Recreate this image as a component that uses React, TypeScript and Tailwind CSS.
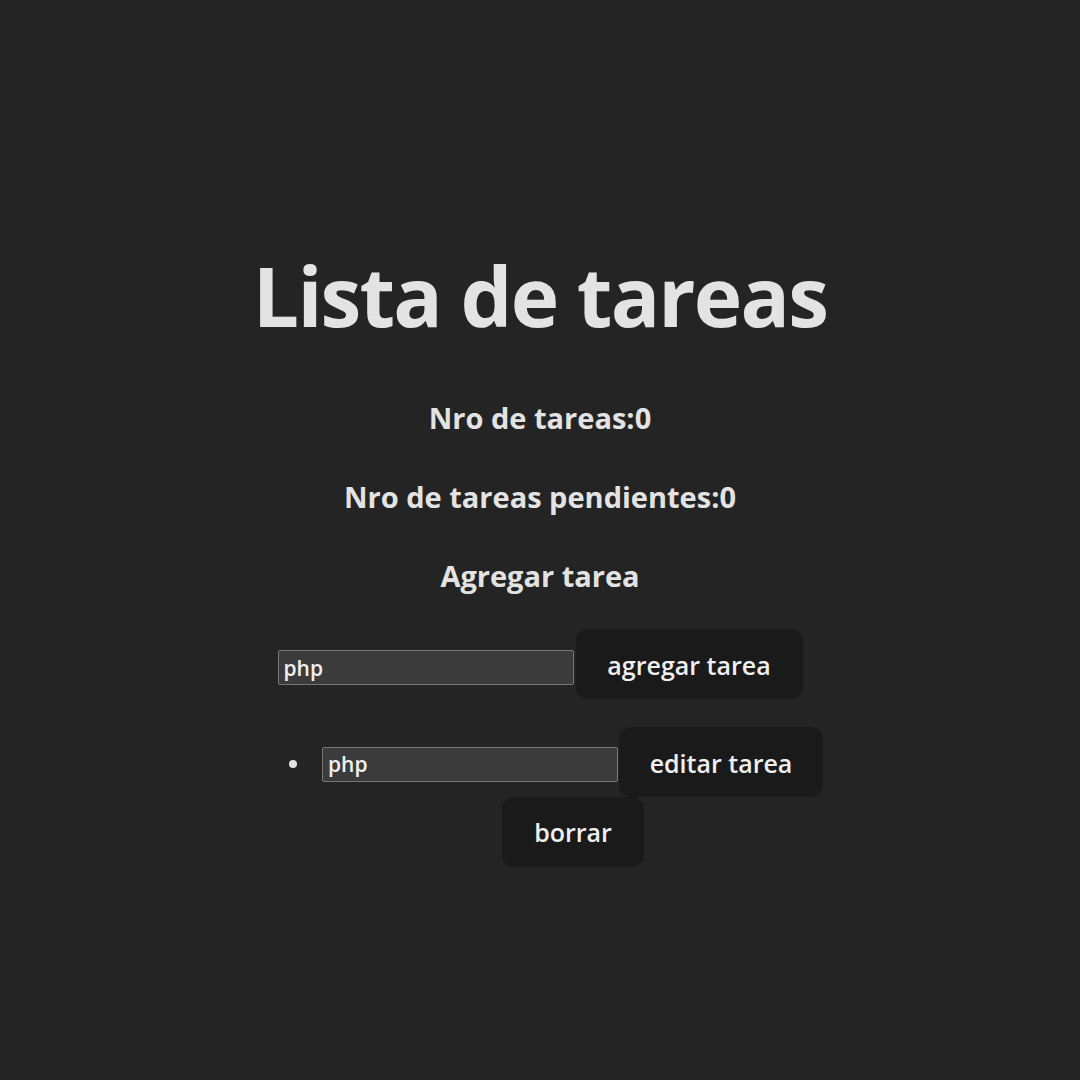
import React from "react";

export default function App() {
  const font = { fontFamily: '"Open Sans", "Noto Sans", sans-serif' };
  return (
    <div
      className="min-h-[1080px] w-full bg-[#242424] text-[#e3e3e3] flex flex-col items-center pt-[250px]"
      style={font}
    >
      <h1 className="text-[82px] font-bold leading-[90px] tracking-[-1.8px]">Lista de tareas</h1>
      <h3 className="mt-[58px] text-[29px] font-bold leading-[40px]">Nro de tareas:0</h3>
      <h3 className="mt-[39px] text-[29px] font-bold leading-[40px]">Nro de tareas pendientes:0</h3>
      <h3 className="mt-[39px] text-[29px] font-bold leading-[40px]">Agregar tarea</h3>
      <div className="mt-[33px] flex items-center">
        <input
          className="mt-[7px] w-[296px] h-[35px] bg-[#3b3b3b] border border-[#767676] rounded-[2px] px-[5px] text-[21px] font-semibold text-[#f0f0f0] outline-none"
          defaultValue="php"
          style={font}
        />
        <button className="ml-[2px] w-[227px] h-[70px] pt-[4px] rounded-[12px] bg-[#1a1a1a] text-[25px] font-semibold text-[#f0f0f0]">
          agregar tarea
        </button>
      </div>
      <ul className="mt-[28px] ml-[32px] w-[534px] flex flex-col">
        <li className="flex items-center">
          <span className="mt-[4px] w-[8px] h-[8px] rounded-full bg-[#e3e3e3] mr-[25px]" />
          <input
            className="mt-[4px] w-[296px] h-[35px] bg-[#3b3b3b] border border-[#767676] rounded-[2px] px-[5px] text-[21px] font-semibold text-[#f0f0f0] outline-none"
            defaultValue="php"
            style={font}
          />
          <button className="ml-[1px] w-[204px] h-[70px] pt-[3px] rounded-[12px] bg-[#1a1a1a] text-[25px] font-semibold text-[#f0f0f0]">
            editar tarea
          </button>
        </li>
        <li className="flex justify-center pl-[34px]">
          <button className="w-[142px] h-[70px] pt-[2px] rounded-[12px] bg-[#1a1a1a] text-[25px] font-semibold text-[#f0f0f0]">
            borrar
          </button>
        </li>
      </ul>
    </div>
  );
}
